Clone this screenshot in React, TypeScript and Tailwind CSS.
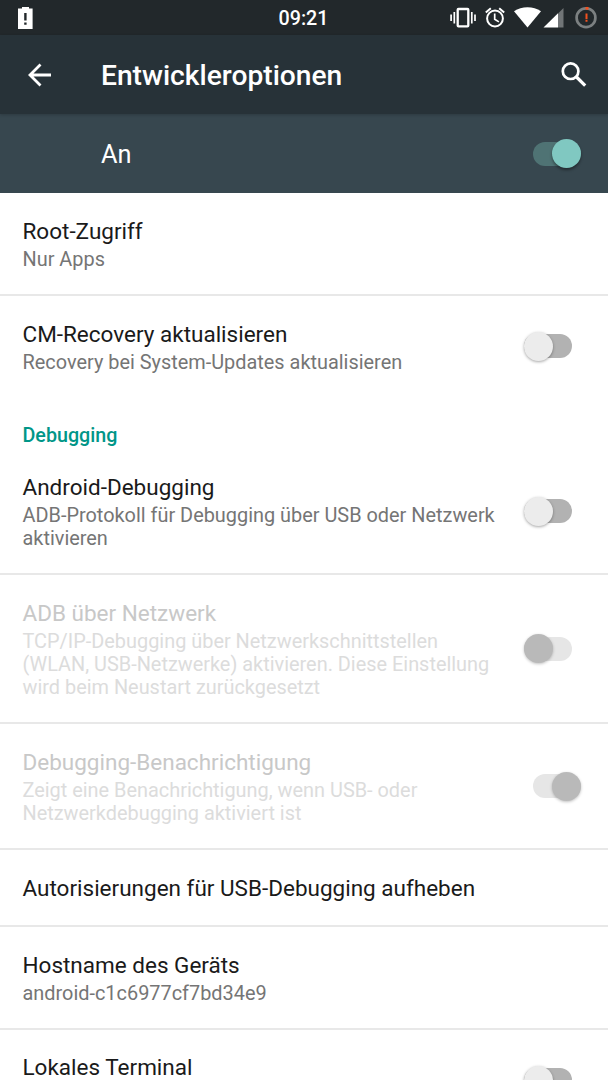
import React from "react";

type SwitchState = "on" | "off" | "disabledOff" | "disabledOn";

function Toggle({ state }: { state: SwitchState }) {
  const right = state === "on" || state === "disabledOn";
  const track = {
    on: "bg-[#4f7374]",
    off: "bg-[#b2b2b2]",
    disabledOff: "bg-[#e6e6e6]",
    disabledOn: "bg-[#e6e6e6]",
  }[state];
  const thumb = {
    on: "bg-[#80c8c1] shadow-[0_2px_3px_rgba(0,0,0,0.4)]",
    off: "bg-[#ececec] shadow-[0_1px_3px_rgba(0,0,0,0.35)]",
    disabledOff: "bg-[#b9b9b9] shadow-[0_1px_3px_rgba(0,0,0,0.25)]",
    disabledOn: "bg-[#b9b9b9] shadow-[0_1px_3px_rgba(0,0,0,0.25)]",
  }[state];
  return (
    <div
      className={`flex h-6 w-12 shrink-0 items-center rounded-full ${track} ${
        right ? "justify-end mr-[27.5px]" : "mr-9"
      }`}
    >
      <div className={`size-[29px] shrink-0 rounded-full ${thumb}`} />
    </div>
  );
}

interface RowProps {
  title: string;
  lines?: string[];
  state?: SwitchState;
  className: string;
}

function Row({ title, lines = [], state, className }: RowProps) {
  const disabled = state === "disabledOff" || state === "disabledOn";
  return (
    <div className={`flex shrink-0 items-center justify-between border-[#e8e8e8] pl-[22.5px] ${className}`}>
      <div className="pt-[2px] whitespace-nowrap">
        <div className={`text-[22.5px] leading-[27px] ${disabled ? "text-[#c8c8c8]" : "text-[#1a1a1a]"}`}>
          {title}
        </div>
        {lines.length > 0 && (
          <div
            className={`pt-[3px] text-[19.9px] leading-[23px] ${disabled ? "text-[#dcdcdc]" : "text-[#757575]"}`}
          >
            {lines.map((line) => (
              <div key={line}>{line}</div>
            ))}
          </div>
        )}
      </div>
      {state && <Toggle state={state} />}
    </div>
  );
}

function StatusBar() {
  return (
    <div className="flex h-[35px] shrink-0 bg-[#22282b] text-white">
      <svg width="240" height="35" className="shrink-0">
        <path d="M22 7h7v1.6h3.6V29H18V8.6h4z" fill="#fff" />
        <path d="M24.2 13h2.4v7.6h-2.4zM24.2 22.4h2.4v2.4h-2.4z" fill="#22282b" />
      </svg>
      <div className="w-[127px] shrink-0 pt-[7px] text-center text-[19.7px] leading-[23px] font-medium">
        09:21
      </div>
      <svg width="241" height="35" viewBox="367 0 241 35" className="shrink-0">
        <g fill="none" stroke="#fff">
          <rect x="457.7" y="9" width="10.6" height="17.3" rx="0.8" strokeWidth="2.3" />
          <path d="M454.3 12v11.6M451.1 14.5v6.5M471.8 12v11.6M475 14.5v6.5" strokeWidth="1.7" />
          <circle cx="495" cy="18.5" r="7.9" strokeWidth="2" />
          <path d="M494.7 13.5v5.8l4.2 2.6" strokeWidth="1.7" />
          <path d="M485.8 12.5l5-4.2M504.2 12.5l-5-4.2" strokeWidth="2" />
        </g>
        <path d="M514 11.3C518 8.6 522.5 7.2 527.5 7.2S537 8.6 541 11.3L527.5 27.5z" fill="#fff" />
        <path d="M563.5 8v19.5H558V13.5z" fill="#717577" />
        <path d="M558 13.3v14.2H543.5z" fill="#fff" />
        <circle cx="586" cy="17.7" r="9.4" fill="none" stroke="#7c8081" strokeWidth="2.7" />
        <path d="M585.5 8.3h3" stroke="#f4511e" strokeWidth="2.7" />
        <path d="M585.5 13.5h2v5.8h-2zM585.5 20.1h2v1.7h-2z" fill="#f4511e" />
      </svg>
    </div>
  );
}

export default function App() {
  return (
    <div className="flex h-[1080px] w-[608px] flex-col overflow-hidden bg-white font-['Roboto',sans-serif]">
      <StatusBar />
      <header className="z-10 flex h-[79px] shrink-0 items-center bg-[#273238] text-white shadow-[0_1px_3px_rgba(0,0,0,0.2)]">
        <svg width="101" height="79" viewBox="0 35 101 79" className="shrink-0" fill="none" stroke="#fff" strokeWidth="2.8">
          <path d="M51 75H30M40.5 64.5L30 75l10.5 10.5" />
        </svg>
        <h1 className="grow pt-[2px] text-[28.2px] leading-[33px] font-medium whitespace-nowrap">Entwickleroptionen</h1>
        <svg width="60" height="79" viewBox="548 35 60 79" className="shrink-0" fill="none" stroke="#fff">
          <circle cx="570.6" cy="71.2" r="7.8" strokeWidth="2.7" />
          <path d="M576.5 77l8.7 8.6" strokeWidth="3.2" />
        </svg>
      </header>
      <div className="flex h-[79px] shrink-0 items-center justify-between bg-[#37474f] pl-[101px] text-white">
        <span className="pt-[3px] text-[25.3px] leading-[30px]">An</span>
        <Toggle state="on" />
      </div>
      <main className="flex flex-col">
        <Row title="Root-Zugriff" lines={["Nur Apps"]} className="h-[103px] border-b-2" />
        <Row
          title="CM-Recovery aktualisieren"
          lines={["Recovery bei System-Updates aktualisieren"]}
          state="off"
          className="h-[100px]"
        />
        <div className="flex h-[53px] shrink-0 items-end pb-[2px] pl-[22.5px] text-[19.7px] leading-[23px] font-medium text-[#009688]">
          Debugging
        </div>
        <Row
          title="Android-Debugging"
          lines={["ADB-Protokoll für Debugging über USB oder Netzwerk", "aktivieren"]}
          state="off"
          className="h-[126px] border-b-2"
        />
        <Row
          title="ADB über Netzwerk"
          lines={[
            "TCP/IP-Debugging über Netzwerkschnittstellen",
            "(WLAN, USB-Netzwerke) aktivieren. Diese Einstellung",
            "wird beim Neustart zurückgesetzt",
          ]}
          state="disabledOff"
          className="h-[149px] border-b-2"
        />
        <Row
          title="Debugging-Benachrichtigung"
          lines={["Zeigt eine Benachrichtigung, wenn USB- oder", "Netzwerkdebugging aktiviert ist"]}
          state="disabledOn"
          className="h-[126px] border-b-2"
        />
        <Row title="Autorisierungen für USB-Debugging aufheben" className="h-[77px] border-b-2" />
        <Row title="Hostname des Geräts" lines={["android-c1c6977cf7bd34e9"]} className="h-[103px] border-b-2" />
        <div className="flex items-start justify-between pt-6 pl-[22.5px]">
          <div className="text-[22.5px] leading-[27px] text-[#1a1a1a]">Lokales Terminal</div>
          <div className="pt-[14px]">
            <Toggle state="off" />
          </div>
        </div>
      </main>
    </div>
  );
}
